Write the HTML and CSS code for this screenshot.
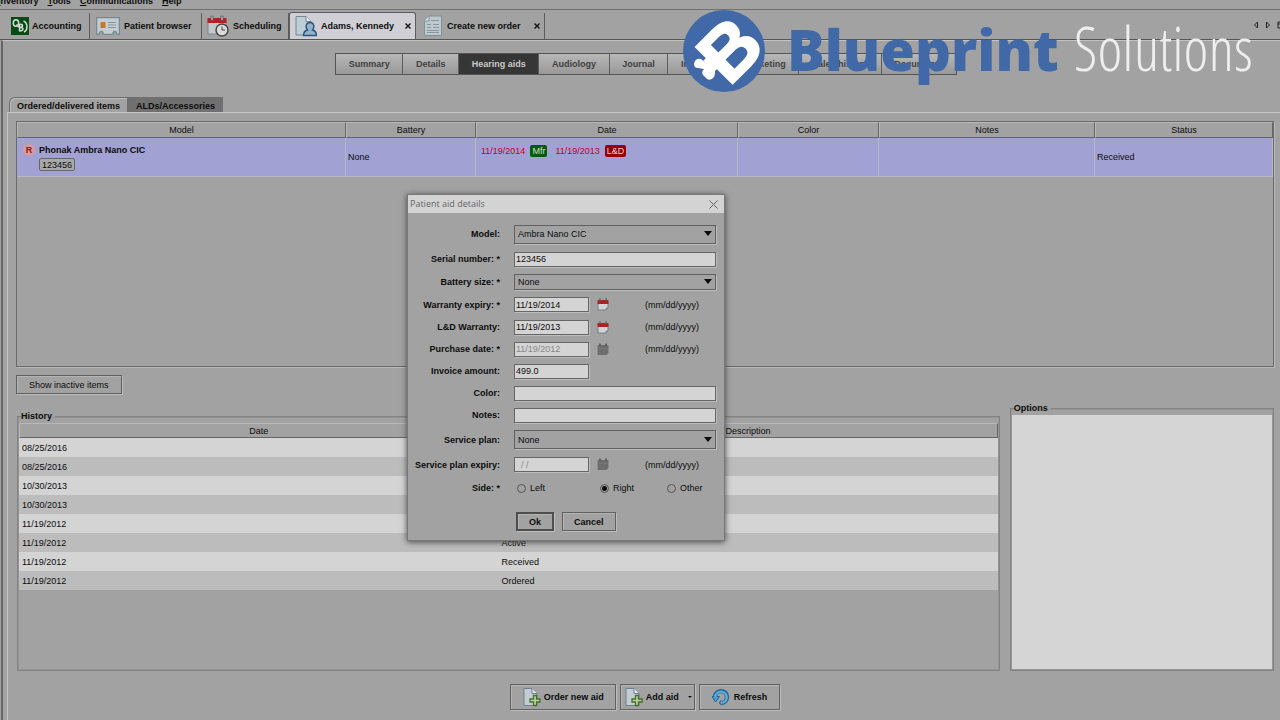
FILE: index.html
```html
<!DOCTYPE html>
<html lang="en">
<head>
<meta charset="utf-8">
<title>Blueprint Solutions</title>
<link rel="stylesheet" href="styles.css">
</head>
<body>
<svg class="defs" aria-hidden="true">
  <symbol id="page-plus" viewBox="0 0 20 20">
    <path d="M2 1.500h8l5 5v12H2z" fill="#c3ccd2" stroke="#71818c"/>
    <path d="M10 1.500v5h5" fill="#e2e7ea" stroke="#71818c"/>
    <path d="M11.500 8.500h3v3.500H18v3h-3.500v3.500h-3V15H8v-3h3.500z" fill="#b9d3a0" stroke="#44702b" stroke-width="1.300"/>
  </symbol>
  <symbol id="calendar" viewBox="0 0 12 13">
    <path d="M1 3h10v7l-2 2H1z" fill="#cfd3d6" stroke="#66737c" stroke-width=".8"/>
    <path d="M.6 2h10.800v4H.6z" fill="#b5201f"/>
    <path d="M3 .5v2.500M9 .5v2.500" stroke="#47525a" stroke-width="1.800"/>
    <path d="M3 .8v1.600M9 .8v1.600" stroke="#ccd" stroke-width=".6"/>
    <path d="M9 12v-2h2" fill="none" stroke="#66737c" stroke-width=".7"/>
  </symbol>
  <symbol id="calendar-off" viewBox="0 0 12 13">
    <path d="M.6 2h10.800v8l-2 2H.6z" fill="#6d6d6d"/>
    <path d="M3 .5v2.500M9 .5v2.500" stroke="#5f5f5f" stroke-width="1.800"/>
    <path d="M1 5.500h10" stroke="#7c7c7c" stroke-width=".6"/>
  </symbol>
</svg>

<nav class="menubar" aria-label="Menu">
  <a href="#"><u>I</u>nventory</a><a href="#"><u>T</u>ools</a><a href="#"><u>C</u>ommunications</a><a href="#"><u>H</u>elp</a>
</nav>

<div class="doc-tabs">
  <button class="doc-tab tab-accounting">
    <svg width="18" height="18" viewBox="0 0 18 18"><path fill="#064a14" d="M0 0h18v18H0z"/><g fill="none" stroke="#d4dcd2" stroke-width="1.500"><ellipse cx="5" cy="6" rx="2.700" ry="3.300"/><path d="M5.500 7.500l3 3M8.500 7v7.500M8.500 7.500c4-.8 4 2.500.5 3 4-.5 4 3.500-.5 3.500M12.500 4c4.500 2 4.500 9 .5 11"/></g></svg>
    <span>Accounting</span>
  </button>
  <button class="doc-tab tab-browser">
    <svg width="24" height="18" viewBox="0 0 24 18"><path d="M.7.700h22.600v16.600h-2.500c0-4-4-4-4 0H7.200c0-4-4-4-4 0H.7z" fill="#c6ccd0" stroke="#718896" stroke-width="1.200"/><path fill="#c9772c" d="M4.500 5h5v6h-5z"/><path d="M12 5.500h8M12 8h8M12 10.500h8" stroke="#8397a3"/></svg>
    <span>Patient browser</span>
  </button>
  <button class="doc-tab tab-scheduling">
    <svg width="22" height="22" viewBox="0 0 22 22"><path d="M1 4h18v15H1z" fill="#c3c9cd" stroke="#788994"/><path fill="#b61f22" d="M.5 3h19v5H.5z"/><path d="M5 .8v4.700M15 .8v4.700" stroke="#59646b" stroke-width="3"/><path d="M5 1.500v3.500M15 1.500v3.500" stroke="#b9c2c8" stroke-width="1.200"/><circle cx="15" cy="15" r="6" fill="#dadada" stroke="#474747" stroke-width="1.500"/><path d="M15 11.500V15h3" fill="none" stroke="#444"/></svg>
    <span>Scheduling</span>
  </button>
  <div class="doc-tab doc-tab-active tab-patient">
    <svg width="22" height="22" viewBox="0 0 22 22"><path d="M1 1.500h10l5 5V20H1z" fill="#bfcdd5" stroke="#748894"/><path d="M11 1.500v5h5" fill="#e4eaee" stroke="#748894"/><path d="M8.500 20.500c0-4 2-5 4-5.500-2.500-3-1.500-7.500 2.500-7.500s5 4.500 2.500 7.500c2 .5 4 1.500 4 5.500z" fill="#93b2cc" stroke="#28557d" stroke-width="1.400"/></svg>
    <span>Adams, Kennedy</span>
    <button class="close" aria-label="Close Adams, Kennedy"><svg width="6" height="6" viewBox="0 0 6 6"><path d="M.5.500l5 5M5.500.500l-5 5" stroke="#111" stroke-width="1.400"/></svg></button>
  </div>
  <div class="doc-tab tab-order">
    <svg width="20" height="22" viewBox="0 0 20 22"><path d="M6 1h12.500v19.500h-17V6z" fill="#bec8cd" stroke="#7c929e"/><path d="M6 1v5H1.500" fill="#d9dfe2" stroke="#7c929e"/><path d="M8 5.500h8M4 9.500h4M10 9.500h6M4 12.500h4M10 12.500h6M4 15.500h12M4 17.500h12" stroke="#8798a2"/></svg>
    <span>Create new order</span>
    <button class="close" aria-label="Close Create new order"><svg width="6" height="6" viewBox="0 0 6 6"><path d="M.5.500l5 5M5.500.500l-5 5" stroke="#111" stroke-width="1.400"/></svg></button>
  </div>
  <svg class="tab-arrows" width="28" height="8" viewBox="0 0 28 8"><path d="M5.500 1v6l-3-3zM14.500 1v6l3-3zM26 1h6v6h-6zM26 3h6" fill="none" stroke="#222"/></svg>
</div>

<main class="workspace">
  <nav class="subnav" aria-label="Patient sections">
    <button>Summary</button><button>Details</button><button class="current">Hearing aids</button><button>Audiology</button><button>Journal</button><button>Invoices</button><button>Marketing</button><button>Sales history</button><button>Documents</button>
  </nav>

  <div class="item-tabs">
    <button class="item-tab item-tab-active">Ordered/delivered items</button><button class="item-tab">ALDs/Accessories</button>
  </div>

  <div class="panel">
    <div class="items-box">
      <table class="items">
        <colgroup><col class="c-model"><col class="c-battery"><col class="c-date"><col class="c-color"><col class="c-notes"><col class="c-status"></colgroup>
        <thead><tr><th>Model</th><th>Battery</th><th>Date</th><th>Color</th><th>Notes</th><th>Status</th></tr></thead>
        <tbody><tr>
          <td><div class="aid"><span class="side-badge">R</span><div><b>Phonak Ambra Nano CIC</b><span class="serial">123456</span></div></div></td>
          <td>None</td>
          <td class="warranties"><span>11/19/2014</span><span class="tag tag-mfr">Mfr</span><span>11/19/2013</span><span class="tag tag-ld">L&amp;D</span></td>
          <td></td><td></td><td>Received</td>
        </tr></tbody>
      </table>
    </div>
    <button class="btn btn-inactive">Show inactive items</button>

    <div class="lower">
      <fieldset class="group history">
        <legend>History</legend>
        <table class="log">
          <colgroup><col class="c-when"><col></colgroup>
          <thead><tr><th>Date</th><th>Description</th></tr></thead>
          <tbody>
            <tr><td>08/25/2016</td><td></td></tr>
            <tr><td>08/25/2016</td><td></td></tr>
            <tr><td>10/30/2013</td><td></td></tr>
            <tr><td>10/30/2013</td><td></td></tr>
            <tr><td>11/19/2012</td><td></td></tr>
            <tr><td>11/19/2012</td><td>Active</td></tr>
            <tr><td>11/19/2012</td><td>Received</td></tr>
            <tr><td>11/19/2012</td><td>Ordered</td></tr>
          </tbody>
        </table>
      </fieldset>
      <fieldset class="group options">
        <legend>Options</legend>
        <div class="options-list"></div>
      </fieldset>
    </div>

    <div class="actions">
      <button class="btn action"><svg width="20" height="20"><use href="#page-plus"/></svg>Order new aid</button>
      <button class="btn action action-add"><svg width="20" height="20"><use href="#page-plus"/></svg>Add aid<span class="caret"></span></button>
      <button class="btn action action-refresh"><svg width="18" height="18" viewBox="0 0 18 18"><path d="M3 9a6 6 0 1 1 7 6" fill="none" stroke="#1c689d" stroke-width="4.400"/><path d="M0 8.500h7.500L3.500 14z" fill="#4b9bce" stroke="#1c689d"/><path d="M3.300 9a5.700 5.700 0 1 1 7 5.900" fill="none" stroke="#62aad8" stroke-width="2.400"/><path d="M9 12.500l-1.500 2.500 2 2" fill="none" stroke="#1c689d" stroke-width="1.200"/></svg>Refresh</button>
    </div>
  </div>
</main>

<div class="brand">
  <svg width="82" height="82" viewBox="0 0 82 82" aria-hidden="true">
    <circle cx="41" cy="41" r="41" fill="#4169a8"/>
    <text class="brand-letter" transform="translate(46 77) rotate(-45)">B</text>
    <path d="M11 54q1-6 7-5l6 5 7 3q2 5 0 10-3 4-7 2l-4-4q-2-3 1-6l-6-1q-4 0-4-4z" fill="#fff"/>
    <path d="M22 49l11 11" stroke="#fff" stroke-width="5"/>
  </svg>
  <span class="brand-name">Blueprint</span>
  <span class="brand-sub">Solutions</span>
</div>

<section class="dialog" role="dialog" aria-labelledby="dialog-title">
  <header class="dialog-head">
    <h2 id="dialog-title">Patient aid details</h2>
    <button class="close" aria-label="Close"><svg width="9" height="9" viewBox="0 0 9 9"><path d="M.5.500l8 8M8.500.500l-8 8" stroke="#666"/></svg></button>
  </header>
  <form class="form">
    <label for="model">Model:</label>
    <div class="combo"><select id="model"><option>Ambra Nano CIC</option></select></div>
    <label for="serial">Serial number: *</label>
    <input id="serial" type="text" value="123456">
    <label for="battery">Battery size: *</label>
    <div class="combo combo-small"><select id="battery"><option>None</option></select></div>
    <label for="warranty">Warranty expiry: *</label>
    <div class="date"><input id="warranty" type="text" value="11/19/2014"><svg width="12" height="13"><use href="#calendar"/></svg><span>(mm/dd/yyyy)</span></div>
    <label for="ld">L&amp;D Warranty:</label>
    <div class="date"><input id="ld" type="text" value="11/19/2013"><svg width="12" height="13"><use href="#calendar"/></svg><span>(mm/dd/yyyy)</span></div>
    <label for="purchase">Purchase date: *</label>
    <div class="date"><input id="purchase" type="text" value="11/19/2012" disabled><svg width="12" height="13"><use href="#calendar-off"/></svg><span>(mm/dd/yyyy)</span></div>
    <label for="amount">Invoice amount:</label>
    <div class="date"><input id="amount" type="text" value="499.0"></div>
    <label for="color">Color:</label>
    <input id="color" type="text">
    <label for="notes">Notes:</label>
    <input id="notes" type="text">
    <label for="plan">Service plan:</label>
    <div class="combo"><select id="plan"><option>None</option></select></div>
    <label for="plan-expiry">Service plan expiry:</label>
    <div class="date"><input id="plan-expiry" type="text" value="  / /" disabled><svg width="12" height="13"><use href="#calendar-off"/></svg><span>(mm/dd/yyyy)</span></div>
    <span class="side-label" id="side-label">Side: *</span>
    <div class="sides" role="radiogroup" aria-labelledby="side-label">
      <label><input type="radio" name="side">Left</label>
      <label><input type="radio" name="side" checked>Right</label>
      <label><input type="radio" name="side">Other</label>
    </div>
    <div class="dialog-actions"><button type="button" class="btn btn-ok">Ok</button><button type="button" class="btn">Cancel</button></div>
  </form>
</section>
</body>
</html>
```
FILE: styles.css
```css
* { box-sizing: border-box; }
body {
  margin: 0;
  min-height: 100vh;
  display: flex;
  flex-direction: column;
  overflow: hidden;
  position: relative;
  background: #a2a2a2;
  color: #0c0c0c;
  font: 9px/12px "Liberation Sans", Arial, sans-serif;
}
button, input, select { font: inherit; color: inherit; margin: 0; }
button { background: none; border: 0; padding: 0; white-space: nowrap; }
svg { flex: none; display: block; }
.defs { position: absolute; width: 0; height: 0; }

.menubar { display: flex; gap: 9px; height: 14px; margin: -5px 0 0 -2px; font-weight: bold; }
.menubar a { color: inherit; text-decoration: none; }

.doc-tabs {
  display: flex;
  height: 31px;
  padding-left: 2px;
  border-top: 1px solid #707070;
  border-bottom: 1px solid #555;
  font-weight: bold;
}
.doc-tab { display: flex; align-items: center; gap: 4px; padding: 0 8px; margin-top: 3px; border-right: 1px solid #5c5c5c; white-space: nowrap; }
.tab-accounting { width: 88px; padding: 0 0 0 9px; gap: 3px; }
.tab-browser { width: 112px; padding: 0 0 0 6px; }
.tab-scheduling { width: 87px; padding: 0 0 0 5px; }
.doc-tab-active { width: 127px; margin-top: 2px; padding: 0 4px 0 5px; background: #d0cfd6; border: 1px solid #5c5c5c; border-bottom: 0; border-radius: 3px 3px 0 0; }
.tab-order { width: 129px; padding: 0 4px 0 7px; }
.doc-tab .close { margin-left: auto; }
.tab-arrows { margin: 11px 0 0 auto; }

.workspace {
  flex: 1;
  display: flex;
  flex-direction: column;
  margin-left: 1px;
  padding: 12px 0 0 4px;
  border-left: 2px solid #666;
  border-top: 1px solid #c2c2c2;
}
.subnav { display: flex; align-self: flex-start; width: 622px; margin-left: 328px; border: 1px solid #555; }
.subnav button {
  flex: 1 1 auto;
  height: 20px;
  padding: 0 12px;
  border-right: 1px solid #5c5c5c;
  background: linear-gradient(#b8b8b8, #989898);
  color: #404040;
  font-weight: bold;
}
.subnav button:last-child { border-right: 0; }
.subnav .current { background: #363636; color: #c9c9c9; }

.item-tabs { display: flex; margin: 22px 0 0 2px; }
.item-tab { height: 15px; padding: 1px 7px 0; border: 1px solid #707070; border-bottom: 0; background: #707070; font-weight: bold; }
.item-tab-active { background: #a2a2a2; border-color: #6d6d6d; box-shadow: inset 1px 1px #bcbcbc; border-top-left-radius: 6px; }

.panel {
  flex: 1;
  display: flex;
  flex-direction: column;
  padding: 8px 6px 10px 8px;
  border-top: 1px solid #c4c4c4;
  border-left: 1px solid #c4c4c4;
}
.items-box { flex: 245 1 0; border: 1px solid #6a6a6a; box-shadow: 1px 1px #b8b8b8; }
table { width: 100%; border-collapse: separate; border-spacing: 0; table-layout: fixed; }
th { font-weight: normal; text-align: center; height: 16px; padding: 0; border: 1px solid #666; border-top-color: #b8b8b8; border-left-color: #b8b8b8; }
.items td { height: 39px; padding: 0 2px; background: #a1a1d3; border-right: 1px solid #b8b8c4; border-bottom: 1px solid #b8b8c4; }
.c-model { width: 329px; }
.c-battery { width: 130px; }
.c-date { width: 262px; }
.c-color { width: 141px; }
.c-notes { width: 216px; }
.aid { display: flex; gap: 4px; padding-left: 4px; }
.aid b { display: block; }
.side-badge { flex: none; width: 12px; height: 12px; border-radius: 50%; background: #d79a9d; color: #a30f14; font-weight: bold; text-align: center; }
.serial { display: inline-block; height: 13px; margin-top: 2px; padding: 0 2px; border: 1px solid #666; border-radius: 2px; background: #a8a8a8; }
.items .warranties { padding: 0 5px 12px; color: #c4001c; }
.tag { display: inline-block; margin: 0 8px 0 5px; padding: 0 2px; border-radius: 2px; color: #d9d9d9; }
.tag-mfr { background: #05590c; }
.tag-ld { background: #970006; }

.btn { border: 1px solid #606060; box-shadow: 1px 1px #bcbcbc, inset 1px 1px #b4b4b4; }
.btn-inactive { align-self: flex-start; height: 19px; margin: 8px 0 8px; padding: 0 12px; }

.lower { flex: 270 1 0; display: flex; gap: 10px; }
.group { display: flex; flex-direction: column; min-width: 0; margin: 0; padding: 1px; border: 1px solid #828282; box-shadow: inset 0 0 0 1px #959595; }
.group legend { height: 12px; margin-left: 2px; padding: 0 3px 0 0; font-weight: bold; }
.history { flex: 985; margin: 8px 0 0 1px; }
.options { flex: 262; }
.options-list { height: 100%; background: #d5d5d5; }
.c-when { width: 49%; }
.log th { height: 15px; }
.log td { height: 19px; padding: 0 3px; background: #d4d4d4; }
.log tr:nth-child(even) td { background: #bcbcbc; }

.actions { display: flex; justify-content: center; gap: 4px; margin: 13px 0 0; }
.action { display: flex; align-items: center; gap: 2px; height: 26px; padding: 0 11px; font-weight: bold; }
.action-add { padding: 0 2px 0 3px; }
.action-refresh { gap: 4px; padding: 0 12px; }
.caret { margin-left: 7px; border: 2px solid transparent; border-top-color: #111; border-bottom: 0; }

.brand { position: absolute; left: 683px; top: 10px; display: flex; align-items: flex-start; height: 82px; white-space: nowrap; }
.brand-letter { font: bold 75px "Liberation Sans", sans-serif; fill: #fff; stroke: #fff; stroke-width: 2px; }
.brand-name { margin-left: 22px; color: #4169a8; font: 800 56px/78px "Open Sans", "Noto Sans", sans-serif; }
.brand-sub { margin-left: 15px; color: #eee; font: 300 60px/76px "Open Sans Condensed Light", "Open Sans Condensed", sans-serif; }

.dialog { position: absolute; left: 407px; top: 194px; width: 318px; border: 1px solid #777; background: #a2a2a2; box-shadow: 0 1px 6px #444; }
.dialog-head { display: flex; align-items: center; justify-content: space-between; height: 18px; padding: 0 6px 0 2px; background: #d3d3d3; color: #666; }
.dialog-head h2 { margin: 0; font: 9px/12px "Open Sans", sans-serif; }
.form {
  display: grid;
  grid-template-columns: 92px 1fr;
  grid-template-rows: 26px 24px 22px 23px repeat(5, 22px) 27px 23px 24px 40px;
  column-gap: 14px;
  align-items: center;
  padding: 8px 8px 0 0;
}
.form > label, .side-label { text-align: right; font-weight: bold; white-space: nowrap; }
.form input[type="text"] { width: 100%; height: 15px; padding: 0 1px; border: 1px solid #666; border-radius: 0; background: #d4d4d4; box-shadow: 1px 1px #bcbcbc; }
.form input:disabled { color: #888; }
.combo { position: relative; }
.combo::after { content: ""; position: absolute; right: 4px; top: calc(50% - 3px); border: 4px solid transparent; border-top: 5px solid #0c0c0c; border-bottom: 0; pointer-events: none; }
.combo select { display: block; width: 100%; height: 19px; padding: 0 3px; appearance: none; border: 1px solid #606060; border-radius: 0; background: #a2a2a2; box-shadow: 1px 1px #bcbcbc; }
.combo-small select { height: 16px; }
.date { display: grid; grid-template-columns: 75px 12px 1fr; column-gap: 8px; align-items: center; }
.date span { margin-left: 28px; }
.sides { display: grid; grid-template-columns: 83px 67px auto; padding-left: 3px; }
.sides label { display: flex; align-items: center; gap: 4px; }
.sides input { appearance: none; width: 9px; height: 9px; border: 1px solid #555; border-radius: 50%; }
.sides input:checked { background: radial-gradient(circle, #0c0c0c 2px, transparent 3px); }
.dialog-actions { grid-column: 2; display: flex; gap: 8px; padding: 3px 0 0 2px; }
.dialog-actions .btn { height: 19px; padding: 0 11px; font-weight: bold; }
.dialog-actions .btn-ok { border: 2px solid #4d4d4d; }
```
